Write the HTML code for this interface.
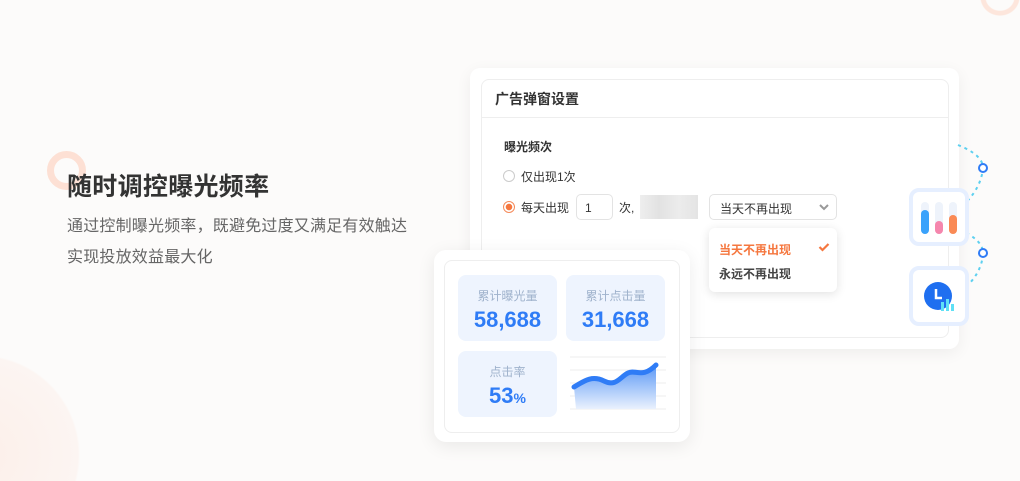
<!DOCTYPE html>
<html><head><meta charset="utf-8"><style>
*{margin:0;padding:0;box-sizing:border-box}
html,body{width:1020px;height:481px;overflow:hidden}
body{background:#fcfbfa;font-family:"Liberation Sans","Noto Sans CJK SC",sans-serif;position:relative}
#w{position:absolute;left:0;top:0;width:1020px;height:481px;overflow:hidden}
.a{position:absolute}
.ring{border-radius:50%}
.tile{position:absolute;background:#eef4fe;border-radius:8px;text-align:center}
.tile .l{font-size:12px;color:#9fb2cc;margin-top:12px}
.tile .n{font-size:22px;font-weight:bold;color:#2f7cf6;margin-top:3px;font-family:"Liberation Sans",sans-serif}
.t{font-size:12px;color:#333;white-space:nowrap}
</style></head><body><div id="w">
<div class="a" style="left:0;top:355px;width:80px;height:126px;background:radial-gradient(circle 100px at -20px 100px,#fcefe9 0,#fcf5f2 98%,rgba(252,251,250,0) 100%)"></div>
<div class="a ring" style="left:47px;top:151px;width:39px;height:39px;border:7px solid #fde0d4"></div>
<div class="a" style="left:980px;top:0;width:40px;height:16px;background:radial-gradient(ellipse 20px 19px at 20px -3px,rgba(0,0,0,0) 14px,#fde6dc 15px,#fde6dc 19px,rgba(0,0,0,0) 20px)"></div>
<div class="a" style="left:67px;top:167px;font-size:25px;font-weight:bold;color:#333;letter-spacing:0.3px">随时调控曝光频率</div>
<div class="a" style="left:67px;top:211px;font-size:16px;color:#666;line-height:31px;letter-spacing:0.2px">通过控制曝光频率，既避免过度又满足有效触达<br>实现投放效益最大化</div>

<div class="a" style="left:470px;top:68px;width:489px;height:281px;background:#fff;border-radius:10px;box-shadow:0 4px 16px rgba(0,0,0,0.06)"></div>
<div class="a" style="left:481px;top:79px;width:468px;height:259px;border:1px solid #eee;border-radius:8px"></div>
<div class="a" style="left:482px;top:117px;width:466px;height:1px;background:#eee"></div>
<div class="a" style="left:495px;top:89px;font-size:14px;font-weight:bold;color:#333">广告弹窗设置</div>
<div class="a" style="left:504px;top:138px;font-size:12px;font-weight:bold;color:#333">曝光频次</div>
<div class="a ring" style="left:503px;top:170px;width:12px;height:12px;border:1px solid #ccc"></div>
<div class="a t" style="left:521px;top:168px">仅出现1次</div>
<div class="a ring" style="left:503px;top:201px;width:12px;height:12px;border:1px solid #f58a5a;background:radial-gradient(circle,#f5773f 3px,#fff 3.5px)"></div>
<div class="a t" style="left:521px;top:199px">每天出现</div>
<div class="a" style="left:576px;top:194px;width:37px;height:26px;border:1px solid #e3e3e3;border-radius:5px;font-size:12px;padding:6px 0 0 8px;color:#333">1</div>
<div class="a t" style="left:619px;top:199px">次,</div>
<div class="a" style="left:640px;top:195px;width:58px;height:24px;background:linear-gradient(90deg,#eee,#e2e2e2,#ececec,#e4e4e4)"></div>
<div class="a" style="left:709px;top:194px;width:128px;height:26px;border:1px solid #e3e3e3;border-radius:5px;font-size:12px;padding:5px 0 0 10px;color:#333">当天不再出现</div>
<svg class="a" style="left:818px;top:203px" width="12" height="8"><path d="M2 2l4 4 4-4" stroke="#999" stroke-width="2" fill="none"/></svg>
<div class="a" style="left:709px;top:228px;width:128px;height:64px;background:#fff;border-radius:6px;box-shadow:0 2px 10px rgba(0,0,0,0.12)"></div>
<div class="a t" style="left:719px;top:241px;color:#f5773f;font-weight:bold">当天不再出现</div>
<svg class="a" style="left:818px;top:242px" width="12" height="10"><path d="M1.5 5l3 3 6-6" stroke="#f5773f" stroke-width="2.2" fill="none"/></svg>
<div class="a t" style="left:719px;top:265px;font-weight:bold;color:#444">永远不再出现</div>

<svg class="a" style="left:955px;top:140px" width="40" height="160"><path d="M3 5 Q28 15 28 28 Q26 50 5 68 M5 90 Q28 100 28 113 Q27 135 5 152" fill="none" stroke="#5dd0f0" stroke-width="2" stroke-dasharray="3 4"/><circle cx="28" cy="28" r="4" fill="#fff" stroke="#2f7cf6" stroke-width="2"/><circle cx="28" cy="113" r="4" fill="#fff" stroke="#2f7cf6" stroke-width="2"/></svg>
<div class="a" style="left:909px;top:188px;width:60px;height:58px;background:#fff;border:4px solid #e6efff;border-radius:10px"></div>
<svg class="a" style="left:919px;top:200px" width="40" height="36"><rect x="2" y="2" width="8" height="32" rx="4" fill="#eef3fb"/><rect x="16" y="2" width="8" height="32" rx="4" fill="#eef3fb"/><rect x="30" y="2" width="8" height="32" rx="4" fill="#eef3fb"/><rect x="2" y="10" width="8" height="24" rx="4" fill="#3aa2fb"/><rect x="16" y="21" width="8" height="13" rx="4" fill="#f586ad"/><rect x="30" y="15" width="8" height="19" rx="4" fill="#fa8a55"/></svg>
<div class="a" style="left:909px;top:266px;width:60px;height:60px;background:#fff;border:4px solid #e6efff;border-radius:10px"></div>
<svg class="a" style="left:922px;top:280px" width="36" height="36"><circle cx="16" cy="16" r="14" fill="#1f6ff0"/><path d="M14 9v9h6" stroke="#fff" stroke-width="2.5" fill="none"/><rect x="19" y="22" width="3" height="9" fill="#5fe0f5"/><rect x="24" y="19" width="3" height="12" fill="#5fe0f5"/><rect x="29" y="24" width="3" height="7" fill="#5fe0f5"/></svg>

<div class="a" style="left:434px;top:250px;width:256px;height:192px;background:#fff;border-radius:12px;box-shadow:0 4px 18px rgba(0,0,0,0.08)"></div>
<div class="a" style="left:444px;top:260px;width:236px;height:173px;border:1px solid #eee;border-radius:8px"></div>
<div class="tile" style="left:458px;top:275px;width:99px;height:66px"><div class="l">累计曝光量</div><div class="n">58,688</div></div>
<div class="tile" style="left:566px;top:275px;width:99px;height:66px"><div class="l">累计点击量</div><div class="n">31,668</div></div>
<div class="tile" style="left:458px;top:351px;width:99px;height:66px"><div class="l">点击率</div><div class="n">53<span style="font-size:14px">%</span></div></div>
<svg class="a" style="left:570px;top:355px" width="96" height="58"><defs><linearGradient id="g" x1="0" y1="0" x2="0" y2="1"><stop offset="0" stop-color="#5b98f6"/><stop offset="1" stop-color="#eaf1fd"/></linearGradient></defs><g stroke="#eee" stroke-width="1"><line x1="0" y1="2" x2="96" y2="2"/><line x1="0" y1="15" x2="96" y2="15"/><line x1="0" y1="28" x2="96" y2="28"/><line x1="0" y1="41" x2="96" y2="41"/><line x1="0" y1="54" x2="96" y2="54"/></g><path d="M4 32 C14 26 22 20 34 26 S50 22 58 18 S72 24 86 10 L86 54 L6 54Z" fill="url(#g)"/><path d="M4 32 C14 26 22 20 34 26 S50 22 58 18 S72 24 86 10" fill="none" stroke="#2f7cf6" stroke-width="5" stroke-linecap="round"/></svg>
</div></body></html>
